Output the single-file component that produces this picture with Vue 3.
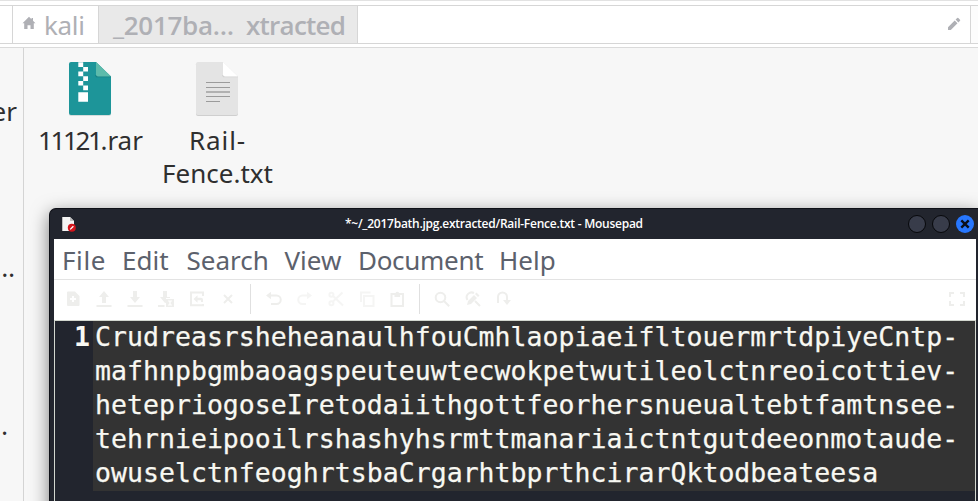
<script setup>
const menus = ['File', 'Edit', 'Search', 'View', 'Document', 'Help']

const lines = [
  'CrudreasrsheheanaulhfouCmhlaopiaeifltouermrtdpiyeCntp-',
  'mafhnpbgmbaoagspeuteuwtecwokpetwutileolctnreoicottiev-',
  'hetepriogoseIretodaiithgottfeorhersnueualtebtfamtnsee-',
  'tehrnieipooilrshashyhsrmttmanariaictntgutdeeonmotaude-',
  'owuselctnfeoghrtsbaCrgarhtbprthcirarQktodbeateesa',
]

const tools = [
  { id: 'new', fill: 'M3 0.5h7L14.5 5v9a1 1 0 0 1-1 1H3a1 1 0 0 1-1-1V1.5a1 1 0 0 1 1-1zM7 5v2H5v2h2v2h2V9h2V7H9V5z' },
  { id: 'open', fill: 'M8 0l5 6H10v6H6V6H3zM0.5 14h15v2H.5z' },
  { id: 'save', fill: 'M6 0h4v6h3l-5 6-5-6h3zM.5 14h15v2H.5z' },
  { id: 'save-as', fill: 'M5 0h4v6h3v1H8v4.5L7 12 2 6h3zM0 14h6.500v2H0zM8 8h8v8H8zM10 9.500v1h1.300v3H10v1h4v-1h-1.300v-3H14v-1z' },
  { id: 'revert', stroke: 'M14 5V1.500H2v12.800h12V13', fill: 'M4.500 8l4-3.800v2.500H12a2 2 0 0 1 2 2V11h-2V9.200H8.500v2.600z' },
  { id: 'close', stroke: 'M4 4l8 8M12 4l-8 8' },
  { id: 'sep1', sep: true },
  { id: 'undo', stroke: 'M3 4.500h7.500a4 4 0 0 1 0 8.500H5', fill: 'M0 4.500L5 .8v7.400z' },
  { id: 'redo', faint: true, stroke: 'M13 4.500H5.500a4 4 0 0 0 0 8.500H9', fill: 'M15 4.500L10 .8v7.400z' },
  { id: 'cut', faint: true, stroke: 'M14.500 1.500L5 10.500M5 5l10 9.500M5.400 3.700a2 2 0 1 1-4 0a2 2 0 1 1 4 0zM5.400 12.200a2 2 0 1 1-4 0a2 2 0 1 1 4 0z' },
  { id: 'copy', faint: true, stroke: 'M2 11V1.500h9.500M5 5h9.500v10H5z' },
  { id: 'paste', stroke: 'M1.500 3h11.500v12H1.500z', fill: 'M4.500 2h1a2 2 0 0 1 3.600 0h1v4H4.500z' },
  { id: 'sep2', sep: true },
  { id: 'find', stroke: 'M11.300 6.500a4.800 4.800 0 1 1-9.600 0a4.800 4.800 0 1 1 9.600 0zM10 10l5.200 5.200' },
  { id: 'replace', stroke: 'M2.500 9C-.5 4 5 0 9 2M10 10l5 5', fill: 'M2 14l1-4 6-6 3 3-6 6zM10 3l1.500-1.500 3 3L13 6z' },
  { id: 'goto', stroke: 'M2 12V6a4.500 4.500 0 0 1 9 0v4', fill: 'M7 9h8l-4 5z' },
]
</script>

<template>
  <div class="desktop">
    <header class="pathbar">
      <div class="edge"></div>
      <div class="crumb home">
        <svg viewBox="0 0 14 14"><path d="M7 .8L.5 7.200H2.200V13H5.500V9.200h3V13h3.300V7.200h1.700L11 4.700V2H9.500v1.200z" /></svg>
        <span>kali</span>
      </div>
      <div class="crumb current"><span class="trunc">_2017ba…</span><span class="tail">xtracted</span></div>
      <div class="entry">
        <svg viewBox="0 0 14 14"><path d="M1 10.200V13h2.800l6.700-6.700-2.800-2.800zM8.600 2.600l2.800 2.800L13 3.800a.8.8 0 0 0 0-1.100L11.300 1a.8.8 0 0 0-1.100 0z" /></svg>
      </div>
      <div class="edge right"></div>
    </header>

    <main class="body">
      <aside class="side">
        <span class="place first">er</span>
        <span class="place second">…</span>
        <span class="place third">…</span>
      </aside>
      <section class="files">
        <figure class="item">
          <svg viewBox="0 0 44 56">
            <path fill="#d5dcdc" d="M3 1.500h25L43 16v37a2 2 0 0 1-2 2H3a2 2 0 0 1-2-2V3.500z" />
            <path fill="#1d9599" d="M3 1h25L43 15.500V52a2 2 0 0 1-2 2H3a2 2 0 0 1-2-2V3a2 2 0 0 1 2-2z" />
            <path fill="#167f84" d="M27 14l1 2.200h15v-1z" />
            <path fill="#5dbbab" d="M28 1l15 14.500H30a2 2 0 0 1-2-2z" />
            <path fill="#fff" d="M10.300 1.300h4.900V6h-4.900zM15.200 6H20v4.600h-4.800zM10.300 10.600h4.900v4.700h-4.900zM15.200 15.300H20v4.600h-4.800zM10.300 19.900h4.900v4.700h-4.900zM15.200 24.600H20v4.700h-4.800zM10.300 31.300H20v9.500h-9.700z" />
          </svg>
          <figcaption><span class="digits">11121</span>.rar</figcaption>
        </figure>
        <figure class="item">
          <svg viewBox="0 0 44 56">
            <path fill="#cfcfcf" d="M3 1.500h25L43 16v37a2 2 0 0 1-2 2H3a2 2 0 0 1-2-2V3.500z" />
            <path fill="#e4e4e4" d="M3 1h25L43 15.500V52a2 2 0 0 1-2 2H3a2 2 0 0 1-2-2V3a2 2 0 0 1 2-2z" />
            <path fill="#d2d2d2" d="M27 14l1 2.200h15v-1z" />
            <path fill="#fff" d="M28 1l15 14.500H30a2 2 0 0 1-2-2z" />
            <path stroke="#9b9b9b" stroke-width="1.200" d="M11 21.500h24M11 26.500h24M11 35.500h24M11 40.500h14" />
            <path stroke="#b1b1b1" stroke-width="2" d="M11 31h24" />
          </svg>
          <figcaption><span class="rail">Rail-</span><br />Fence.txt</figcaption>
        </figure>
      </section>
    </main>

    <div class="window">
      <div class="titlebar">
        <svg class="app" viewBox="0 0 16 16">
          <path fill="#f4f4f4" d="M1 1h8l4 4v10H1z" />
          <path fill="#bdbdbd" d="M1 1h1v14H1zM9 1l4 4H9z" />
          <circle cx="10.800" cy="11.800" r="4" fill="#d3151c" />
          <path stroke="#fff" stroke-width="1.300" d="M9.200 13.400l3.200-3.200" />
        </svg>
        <div class="title">*~/_2017bath.jpg.extracted/Rail-Fence.txt - Mousepad</div>
        <div class="controls">
          <i></i><i></i>
          <svg viewBox="0 0 18 18"><circle cx="9" cy="9" r="9" fill="#2777ff" /><path stroke="#0b0f1a" stroke-width="2.400" d="M5.300 5.300l7.400 7.400M12.700 5.300l-7.400 7.400" /></svg>
        </div>
      </div>
      <div class="client">
        <nav class="menubar">
          <span v-for="m in menus" :key="m" :class="m.toLowerCase()">{{ m }}</span>
        </nav>
        <div class="toolbar">
          <template v-for="t in tools" :key="t.id">
            <span v-if="t.sep" class="sep" :class="t.id"></span>
            <svg v-else viewBox="0 0 16 16" :class="{ faint: t.faint }">
              <path v-if="t.stroke" class="line" :d="t.stroke" />
              <path v-if="t.fill" class="solid" :d="t.fill" />
            </svg>
          </template>
          <svg class="full" viewBox="0 0 16 16"><path class="line" d="M1 6V2h4M11 2h4v4M15 10v4h-4M5 14H1v-4" /></svg>
        </div>
        <div class="editor">
          <div class="gutter">1</div>
          <div class="text"><div v-for="l in lines" :key="l">{{ l }}</div></div>
        </div>
      </div>
    </div>
  </div>
</template>

<style>
body { margin: 0; overflow: hidden; }
</style>

<style scoped>
.desktop { position: relative; width: 978px; height: 501px; overflow: hidden; display: flex; flex-direction: column; background: #f7f7f7; font: 26px/33px "Noto Sans", sans-serif; color: #2f2f2f; box-sizing: border-box; }
.desktop * { box-sizing: border-box; }
svg { display: block; flex: none; }
.pathbar { height: 48px; flex: none; display: flex; padding: 4px 0 3px; background: linear-gradient(#e2e2e2 1px, #fff 1px); border-bottom: 1px solid #dadada; }
.pathbar > div { border-top: 1px solid #d6d6d6; border-bottom: 1px solid #d6d6d6; margin-top: 1px; height: 39px; background: #fff; }
.edge { width: 12px; }
.edge.right { width: 8px; border-left: 1px solid #d6d6d6; background: #fcfcfc; }
.crumb { display: flex; align-items: center; border-left: 1px solid #d6d6d6; color: #afb0b5; white-space: pre; }
.crumb svg, .entry svg { width: 14px; height: 14px; fill: #afb0b5; }
.home { width: 86px; padding-left: 9px; gap: 8px; }
.home svg { margin-bottom: 3px; }
.home span { letter-spacing: -0.3px; margin-top: 2px; }
.current { width: 260px; padding: 2px 0 0 14px; border-right: 1px solid #d6d6d6; font-family: "Open Sans", sans-serif; font-weight: 600; }
.pathbar > .current { background: #e9e9e9; }
.trunc { width: 133px; letter-spacing: -0.3px; }
.tail { letter-spacing: -0.75px; }
.entry { flex: 1; display: flex; justify-content: flex-end; align-items: center; padding: 0 9px 1px 0; }
.body { flex: 1; display: flex; }
.side { width: 24px; flex: none; border-right: 1px solid #d4d4d4; display: flex; flex-direction: column; align-items: flex-end; overflow: hidden; }
.place { height: 33px; }
.first { margin: 47px 6px 0 0; }
.second { margin: 123px 8px 0 0; }
.third { margin: 125px 15px 0 0; }
.files { display: flex; padding: 13px 0 0 3px; }
.item { margin: 0; width: 127px; display: flex; flex-direction: column; align-items: center; text-align: center; white-space: nowrap; }
.item svg { width: 44px; height: 56px; margin: 0 2px 7px 0; }
.digits { letter-spacing: -2.4px; }
.rail { letter-spacing: 0.9px; }
.window { position: absolute; left: 49px; top: 208px; width: 929px; height: 310px; padding: 0 2px 0 4px; background: #22252e; border: 1px solid #0f1118; border-width: 1px 0 0 1px; border-radius: 7px 0 0 0; box-shadow: 0 5px 18px rgba(0, 0, 0, 0.5); }
.titlebar { height: 30px; display: flex; align-items: center; }
.app { width: 16px; height: 16px; margin-left: 7px; }
.title { flex: 1; padding-left: 268px; color: #fff; font: 600 12px/18px "Open Sans", sans-serif; letter-spacing: -0.25px; white-space: nowrap; }
.controls { display: flex; gap: 6px; padding-right: 2px; }
.controls i { width: 18px; height: 18px; border-radius: 50%; border: 1px solid #07080b; background: #383c4a; }
.controls svg { width: 18px; height: 18px; }
.client { background: #fff; }
.menubar { height: 41px; display: grid; grid-template-columns: 60px 64.5px 98px 73.5px 141px auto; padding: 5px 0 0 8px; border-bottom: 1px solid #e3e3e3; color: #5c616c; }
.file { letter-spacing: 0.6px; }
.document { letter-spacing: -0.3px; }
.toolbar { height: 40px; display: flex; align-items: center; gap: 15px; padding: 0 11px 2px; }
.toolbar svg { width: 16px; height: 16px; }
.line { fill: none; stroke: #eeeeec; stroke-width: 2; }
.solid { fill: #eeeeec; fill-rule: evenodd; }
.faint { opacity: 0.55; }
.sep { width: 1px; height: 30px; background: #e0e0e0; }
.sep1 { margin-left: -1px; }
.sep2 { margin: 0 -1px 0 -2px; }
.toolbar .full { margin-left: auto; }
.editor { height: 190px; display: flex; border: 1px solid #d3d7cf; background: #22252e; font: 26.5px/34px "DejaVu Sans Mono", monospace; color: #f8f8f2; }
.gutter { width: 38px; padding-right: 3px; text-align: right; font-weight: bold; margin-top: -1px; }
.text { flex: 1; height: 170px; padding-left: 2px; background: #333; white-space: pre; letter-spacing: 0.03px; -webkit-text-stroke: 0.25px #f8f8f2; }
.text div { height: 34px; line-height: 32px; }
</style>
